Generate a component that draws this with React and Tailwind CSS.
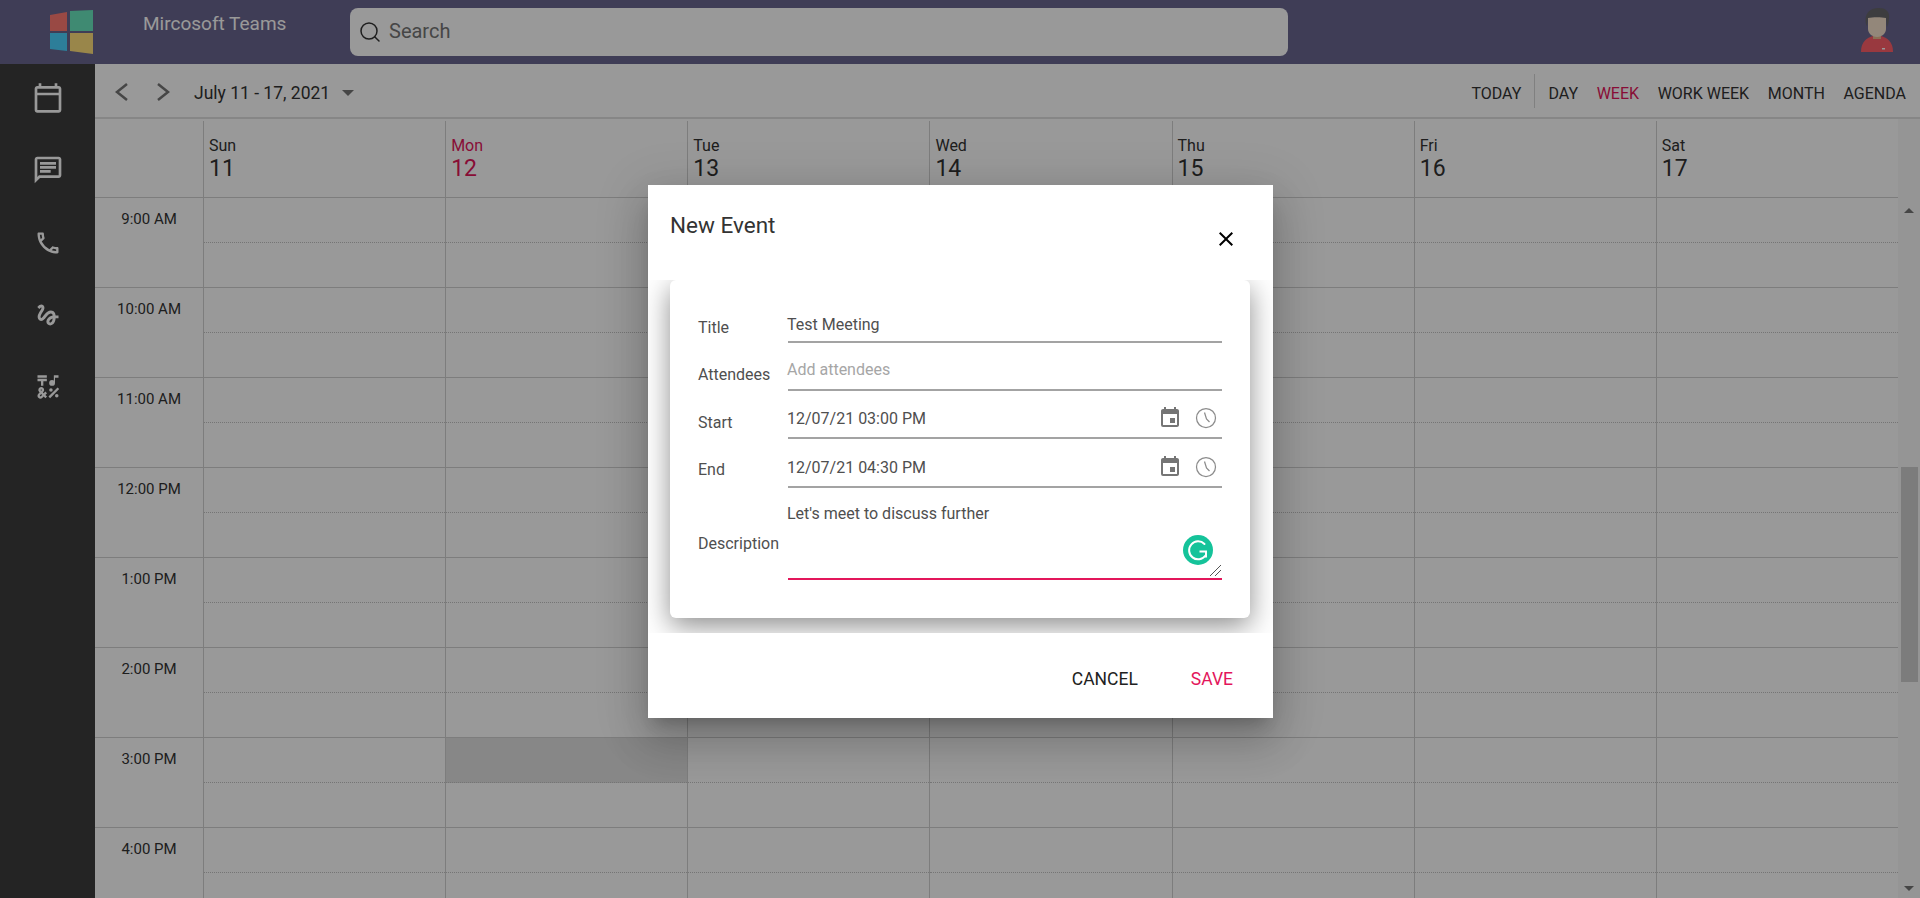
import React from 'react';
import { Search } from 'lucide-react';
import {
  MdOutlineCalendarToday,
  MdOutlineChat,
  MdOutlineCall,
  MdGesture,
  MdOutlineEmojiSymbols,
  MdEvent,
  MdClose,
} from 'react-icons/md';

const days = [
  { name: 'Sun', date: 11 },
  { name: 'Mon', date: 12, today: true },
  { name: 'Tue', date: 13 },
  { name: 'Wed', date: 14 },
  { name: 'Thu', date: 15 },
  { name: 'Fri', date: 16 },
  { name: 'Sat', date: 17 },
];

const hours = ['9:00 AM', '10:00 AM', '11:00 AM', '12:00 PM', '1:00 PM', '2:00 PM', '3:00 PM', '4:00 PM'];

const views = ['DAY', 'WEEK', 'WORK WEEK', 'MONTH', 'AGENDA'];

const sideIcons = [
  { Icon: MdOutlineCalendarToday, cls: 'h-[74px] pt-[2px]' },
  { Icon: MdOutlineChat, cls: 'h-[75px]' },
  { Icon: MdOutlineCall, cls: 'h-[72px]' },
  { Icon: MdGesture, cls: 'h-[72px]' },
  { Icon: MdOutlineEmojiSymbols, cls: 'h-[72px]' },
];

const WindowsLogo = () => (
  <svg width="44" height="45" viewBox="0 0 44 45">
    <polygon points="0,5 17,2 17,21 0,21" fill="#ff7b72" />
    <polygon points="20,1 43,0 43,21 20,21" fill="#69e6be" />
    <polygon points="0,23 17,23 17,41 0,39" fill="#4cd3ff" />
    <polygon points="20,23 43,23 43,44 20,41" fill="#ffdf7c" />
  </svg>
);

const Avatar = () => (
  <svg width="32" height="44" viewBox="0 0 32 44">
    <path d="M0 44 C0 33 6 30 12 28 L20 28 C26 30 32 33 32 44 Z" fill="#ff5f6a" />
    <rect x="12" y="24" width="8" height="7" fill="#e8b98e" />
    <path d="M7 10 C7 4 25 4 25 10 L25 21 C25 26 20 29 16 29 C12 29 7 26 7 21 Z" fill="#f6e2cc" />
    <path d="M5 16 C3 4 10 0 18 0 C24 0 29 3 28 10 C28 13 27 17 26 19 L25 10 C20 9 12 9 7 10 L6 18 Z" fill="#66666a" />
    <rect x="21" y="40" width="3" height="1.5" fill="#ffffff" />
  </svg>
);

const GrammarlyBadge = () => (
  <svg width="30" height="30" viewBox="0 0 30 30">
    <circle cx="15" cy="15" r="15" fill="#15c39a" />
    <path d="M21.5 9 A9 9 0 1 0 22.5 20.5" fill="none" stroke="#fff" strokeWidth="2" strokeLinecap="round" />
    <path d="M16.5 16.5 H23 V22.5" fill="none" stroke="#fff" strokeWidth="2" />
  </svg>
);

const Chevron = ({ d, className }) => (
  <svg width="24" height="24" viewBox="0 0 24 24" fill="none" stroke="#757575" strokeWidth="2.5" className={className}>
    <path d={d} />
  </svg>
);

const ClockIcon = () => (
  <svg width="22" height="22" viewBox="0 0 22 22" fill="none" stroke="#8c8c8c" strokeWidth="1.25">
    <circle cx="11" cy="11" r="9.5" />
    <path d="M9.5 5.5 L11.5 12 L14.5 15" />
  </svg>
);

const fields = [
  { label: 'Title', value: 'Test Meeting', height: 'h-[49px]', labelPad: 'pb-[5px]', valuePad: 'pb-[6px]' },
  { label: 'Attendees', value: 'Add attendees', placeholder: true, height: 'h-[48px]', labelPad: 'pb-[6px]', valuePad: 'pb-[9px]' },
  { label: 'Start', value: '12/07/21 03:00 PM', icons: true, height: 'h-[48px]', labelPad: 'pb-[6px]', valuePad: 'pb-[5px]' },
  { label: 'End', value: '12/07/21 04:30 PM', icons: true, height: 'h-[49px]', labelPad: 'pb-[8px]', valuePad: 'pb-[5px]' },
];

const App = () => {
  return (
    <div className="relative w-[1920px] h-[898px] overflow-hidden bg-white font-['Roboto',sans-serif] text-black">
      {/* Top bar */}
      <div className="flex h-[64px] items-start bg-[#69668f]">
        <div className="w-[143px] pl-[50px] pt-[10px]">
          <WindowsLogo />
        </div>
        <div className="w-[207px] pt-[13px] text-[19px] leading-[22px] text-white">Mircosoft Teams</div>
        <div className="mt-[8px] flex h-[48px] w-[938px] items-center rounded-lg bg-white pl-[8px]">
          <Search size={24} strokeWidth={1.5} className="text-[#333]" />
          <span className="ml-[7px] pb-[2px] text-[20px] text-[#757575]">Search</span>
        </div>
        <div className="ml-auto pr-[27px] pt-[8px]">
          <Avatar />
        </div>
      </div>

      <div className="flex h-[834px]">
        {/* Side nav */}
        <div className="flex w-[95px] flex-col items-center bg-[#3c3c3c] pt-[16px] text-white">
          {sideIcons.map(({ Icon, cls }, i) => (
            <div key={i} className={cls}>
              <Icon size={i === 0 || i === 1 ? 32 : 28} />
            </div>
          ))}
        </div>

        {/* Scheduler */}
        <div className="flex min-w-0 flex-1 flex-col">
          <div className="flex h-[55px] items-center border-b-2 border-[#e0e0e0] pl-[15px] pr-[14px]">
            <Chevron d="M17 4 L7 12 L17 20" className="mt-[2px]" />
            <Chevron d="M7 4 L17 12 L7 20" className="ml-[17px] mt-[2px]" />
            <span className="ml-[19px] pt-[6px] text-[17.5px] text-[#333]">July 11 - 17, 2021</span>
            <span className="ml-[12px] mt-[4px] h-0 w-0 border-x-[6px] border-t-[6px] border-x-transparent border-t-[#757575]" />
            <div className="ml-auto flex h-[34px] items-center text-[16px] text-[#333]">
              <span className="mr-[13px] pt-[6px]">TODAY</span>
              <span className="mr-[13px] h-full w-px bg-[#d5d5d5]" />
              <div className="flex gap-[18.6px] pt-[6px]">
                {views.map((v) => (
                  <span key={v} className={v === 'WEEK' ? 'text-[#e3165b]' : ''}>
                    {v}
                  </span>
                ))}
              </div>
            </div>
          </div>

          <div className="flex flex-1 min-h-0">
            <div className="w-[1803px] overflow-hidden">
              {/* Day header */}
              <div className="grid h-[79px] grid-cols-[108px_repeat(7,1fr)] border-b border-[#d0d0d0] pt-[2px]">
                <div />
                {days.map((d) => (
                  <div
                    key={d.name}
                    className={`border-l border-[#d0d0d0] pl-[5px] pt-[16px] ${d.today ? 'text-[#e3165b]' : 'text-[#333]'}`}
                  >
                    <div className="text-[16px] leading-[17px]">{d.name}</div>
                    <div className="text-[23px] leading-[30px]">{d.date}</div>
                  </div>
                ))}
              </div>

              {/* Time grid */}
              {hours.map((hour) => (
                <div key={hour} className="grid h-[90px] grid-cols-[108px_repeat(7,1fr)] border-b border-[#d0d0d0]">
                  <div className="pt-[11px] text-center text-[15px] leading-[20px] text-[#333]">{hour}</div>
                  {days.map((d) => (
                    <div key={d.name} className="border-l border-[#d0d0d0]">
                      <div
                        className={`h-[45px] border-b border-dotted border-[#c4c4c4] ${
                          hour === '3:00 PM' && d.name === 'Mon' ? 'bg-[#e1e1e1]' : ''
                        }`}
                      />
                    </div>
                  ))}
                </div>
              ))}
            </div>

            {/* Scrollbar */}
            <div className="flex w-[22px] flex-col items-center bg-[#f8f8f8] pt-[79px]">
              <span className="mt-[10px] h-0 w-0 border-x-[5px] border-b-[5px] border-x-transparent border-b-[#757575]" />
              <span className="mt-[254px] h-[215px] w-[17px] shrink-0 bg-[#cfcfcf]" />
              <span className="mt-auto mb-[7px] h-0 w-0 border-x-[5px] border-t-[5px] border-x-transparent border-t-[#757575]" />
            </div>
          </div>
        </div>
      </div>

      {/* Modal */}
      <div className="absolute inset-0 flex justify-center bg-black/40 pl-px pt-[185px]">
        <div className="flex h-[533px] w-[625px] flex-col bg-white shadow-[0_11px_15px_-7px_rgba(0,0,0,0.2),0_24px_38px_3px_rgba(0,0,0,0.14),0_9px_46px_8px_rgba(0,0,0,0.12)]">
          <div className="relative h-[95px] shrink-0 pl-[22px] pt-[26px] text-[22.5px] leading-[28px] text-[#333]">
            New Event
            <MdClose size={24} className="absolute right-[35px] top-[42px] text-black" />
          </div>

          <div className="h-[353px] shrink-0 overflow-hidden pl-[22px]">
            <div className="h-[338px] w-[580px] rounded-md bg-white pl-[28px] pt-[14px] shadow-[0_8px_28px_rgba(0,0,0,0.45)]">
              {fields.map((f) => (
                <div key={f.label} className={`flex items-end ${f.height}`}>
                  <div className={`w-[90px] text-[16px] leading-[20px] text-[#4f4f4f] ${f.labelPad}`}>{f.label}</div>
                  <div className={`flex w-[434px] items-center border-b-2 border-[#a3a3a3] leading-[20px] ${f.valuePad}`}>
                    <span className={`-ml-px text-[16px] ${f.placeholder ? 'text-[#a6a6a6]' : 'text-[#4f4f4f]'}`}>{f.value}</span>
                    {f.icons && (
                      <div className="mb-[2px] ml-auto flex items-center gap-[13px] pr-[5px]">
                        <MdEvent size={24} className="text-[#757575]" />
                        <ClockIcon />
                      </div>
                    )}
                  </div>
                </div>
              ))}

              {/* Description */}
              <div className="flex h-[92px] items-center">
                <div className="w-[90px] pt-[20px] text-[16px] leading-[20px] text-[#4f4f4f]">Description</div>
                <div className="relative h-[92px] w-[434px] border-b-2 border-[#e3165b] pt-[16px] text-[16px] leading-[20px] text-[#4f4f4f]">
                  <span className="-ml-px">Let's meet to discuss further</span>
                  <div className="absolute right-[9px] top-[47px]">
                    <GrammarlyBadge />
                  </div>
                  <svg className="absolute bottom-[2px] right-px" width="11" height="11" viewBox="0 0 11 11">
                    <path d="M0 11 L11 0 M5 11 L11 5" stroke="#555" strokeWidth="1" />
                  </svg>
                </div>
              </div>
            </div>
          </div>

          <div className="flex flex-1 items-start justify-end pr-[40px] pt-[34px] text-[17.5px] leading-[24px]">
            <span className="text-[#212121]">CANCEL</span>
            <span className="ml-[53px] text-[#e3165b]">SAVE</span>
          </div>
        </div>
      </div>
    </div>
  );
};

export default App;
